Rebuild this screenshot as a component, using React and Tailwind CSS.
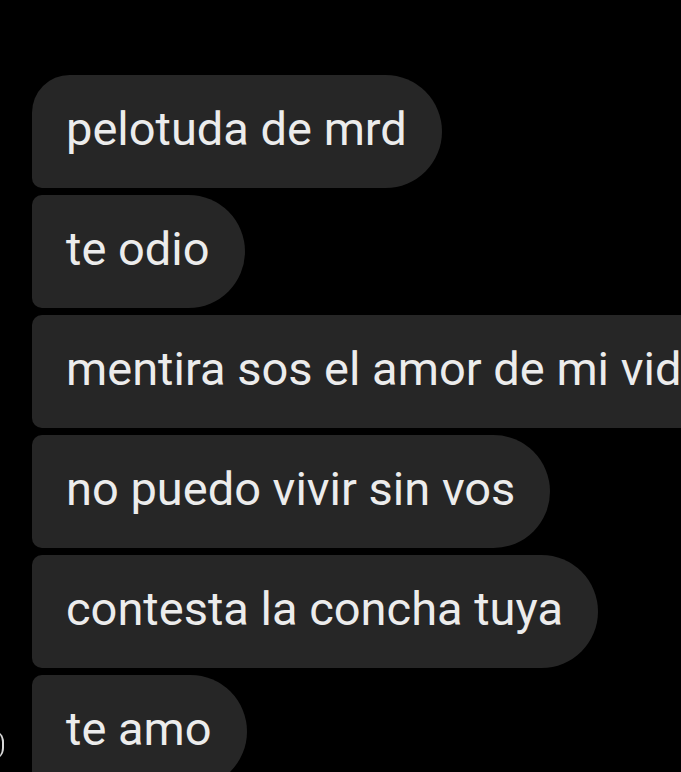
const messages = [
  'pelotuda de mrd',
  'te odio',
  'mentira sos el amor de mi vida',
  'no puedo vivir sin vos',
  'contesta la concha tuya',
  'te amo',
];

export default function App() {
  return (
    <div className="relative w-[681px] h-[772px] overflow-hidden bg-black font-['Roboto',sans-serif]">
      {/* bit of the avatar ring peeking in on the left */}
      <div className="absolute left-[-20px] top-[730px] w-[24px] h-[30px] rounded-full border-r-[2px] border-[#d8d8d8]" />

      <div className="flex flex-col items-start gap-[7px] pt-[75px] pl-[32px]">
        {messages.map((m, i) => (
          <div
            key={i}
            className={`flex items-center h-[113px] pl-[34px] pr-[35px] bg-[#262626] rounded-r-[57px] whitespace-nowrap text-[47px] text-[#ececec] ${
              i === 0 ? 'rounded-tl-[38px] rounded-bl-[10px]' : 'rounded-l-[10px]'
            }`}
          >
            <span className="pb-[4px]">{m}</span>
          </div>
        ))}
      </div>
    </div>
  );
}
